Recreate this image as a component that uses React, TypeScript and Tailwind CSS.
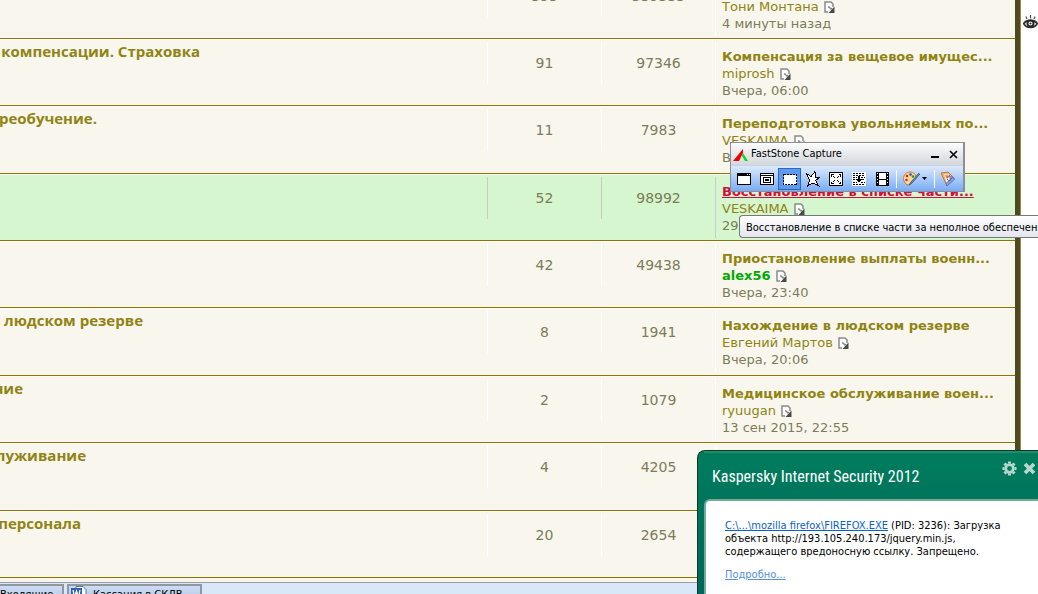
import type { ReactNode } from "react";

type Topic = {
  title: string;
  titleWidth: string;
  height: string;
  topics: string;
  posts: string;
  last?: string;
  user?: string;
  date?: string;
  active?: boolean;
  online?: boolean;
};

const rows: Topic[] = [
  { title: "", titleWidth: "w-0", height: "h-[67px]", topics: "393", posts: "339333", last: "Денежное довольствие", user: "Тони Монтана", date: "4 минуты назад" },
  { title: "компенсации. Страховка", titleWidth: "w-[200px]", height: "h-[67px]", topics: "91", posts: "97346", last: "Компенсация за вещевое имущес...", user: "miprosh", date: "Вчера, 06:00" },
  { title: "реобучение.", titleWidth: "w-[97px]", height: "h-[68px]", topics: "11", posts: "7983", last: "Переподготовка увольняемых по...", user: "VESKAIMA", date: "Вчера, 12:10" },
  { title: "", titleWidth: "w-0", height: "h-[67px]", topics: "52", posts: "98992", last: "Восстановление в списке части...", user: "VESKAIMA", date: "29 сен 2015", active: true },
  { title: "", titleWidth: "w-0", height: "h-[67px]", topics: "42", posts: "49438", last: "Приостановление выплаты военн...", user: "alex56", date: "Вчера, 23:40", online: true },
  { title: "и людском резерве", titleWidth: "w-[143px]", height: "h-[68px]", topics: "8", posts: "1941", last: "Нахождение в людском резерве", user: "Евгений Мартов", date: "Вчера, 20:06" },
  { title: "ние", titleWidth: "w-[23px]", height: "h-[67px]", topics: "2", posts: "1079", last: "Медицинское обслуживание воен...", user: "ryuugan", date: "13 сен 2015, 22:55" },
  { title: "луживание", titleWidth: "w-[86px]", height: "h-[68px]", topics: "4", posts: "4205" },
  { title: "персонала", titleWidth: "w-[81px]", height: "h-[67px]", topics: "20", posts: "2654" },
];

const uiFont = "font-['DejaVu_Sans_Condensed','Noto_Sans',sans-serif]";
const cell = "border-b border-t border-b-[#8c7500] border-t-[#fffdf6] p-0";

function PostIcon() {
  return (
    <svg width="11" height="12" viewBox="0 0 11 12" aria-hidden="true">
      <path d="M1 1h6l2 2v3L5 11H1z" fill="#fff" />
      <path d="M9 6V3L7 1H1v10h3" fill="none" stroke="#8a8a8a" strokeWidth="1.500" />
      <path d="M4 6h1l2 2 1-1" fill="none" stroke="#888" strokeWidth="1.300" />
      <path d="M10.500 5.500V12H4.500z" fill="#4a4a4a" />
    </svg>
  );
}

function Row({ t }: { t: Topic }) {
  const line = t.active ? "border-[#c3cfc0]" : "border-white";
  return (
    <tr className={`${t.height} align-top ${t.active ? "bg-[#d6f6d0]" : "bg-[#f9f6ee]"}`}>
      <td className={`overflow-hidden ${cell}`}>
        {t.title && (
          <div className={`flex justify-end pt-px ${t.titleWidth}`}>
            <a href="#forum" className="shrink-0 whitespace-nowrap font-['Open_Sans','Noto_Sans',sans-serif] text-[15px] font-bold leading-5">
              {t.title}
            </a>
          </div>
        )}
      </td>
      {[t.topics, t.posts].map((n, i) => (
        <td key={i} className={`${cell} pt-[2px]`}>
          <div className={`h-[42px] border-l text-center text-sm leading-[42px] text-[#7c7c58] ${line}`}>{n}</div>
        </td>
      ))}
      <td className={`${cell} pt-[2px]`}>
        <div className={`h-[61px] overflow-hidden whitespace-nowrap border-l pl-[6px] pt-[6px] text-[13px] leading-[17px] ${line}`}>
          {t.last && (
            <>
              <a href="#topic" className={`block font-bold ${t.active ? "text-[#d0103c] underline" : ""}`}>{t.last}</a>
              <div className="flex items-center gap-[5px]">
                <a href="#user" className={t.online ? "font-bold text-[#00aa00]" : ""}>{t.user}</a>
                <a href="#last" aria-label="Последнее сообщение"><PostIcon /></a>
              </div>
              <div className="text-[#7c7c58]">{t.date}</div>
            </>
          )}
        </div>
      </td>
    </tr>
  );
}

function Tool({ label, selected, children }: { label: string; selected?: boolean; children: ReactNode }) {
  return (
    <button aria-label={label} className={`flex h-[22px] w-[23px] items-center justify-center border ${selected ? "border-[#2f66bd] bg-[#5b9bf0]" : "border-transparent"}`}>
      <svg width="16" height="16" viewBox="0 0 16 16" fill="none" stroke="#000" shapeRendering="crispEdges">{children}</svg>
    </button>
  );
}

function CaptureWindow() {
  return (
    <section className={`absolute left-[730px] top-[142px] w-[235px] border border-r-2 border-[#8b8e98] bg-white text-black ${uiFont}`}>
      <header className="flex h-[22px] items-center border-t border-white bg-linear-to-b from-[#fafafa] to-[#d3d7dc] pl-[2px] pr-px text-[11px]">
        <svg width="17" height="14" viewBox="0 0 17 14" aria-hidden="true">
          <path d="M0 13 10 1v4L6 13z" fill="#f00000" />
          <path d="m10 5 5 8h-3L9 8z" fill="#00e020" />
        </svg>
        <h2 className="flex-1 pl-[1px]">FastStone Capture</h2>
        <button aria-label="Свернуть" className="flex h-4 w-[18px] items-center justify-center">
          <svg width="8" height="8" viewBox="0 0 8 8"><path d="M0 5h8v2H0z" /></svg>
        </button>
        <button aria-label="Закрыть" className="flex h-4 w-[18px] items-center justify-center">
          <svg width="9" height="9" viewBox="0 0 9 9"><path d="m1 1 7 7m0-7L1 8" stroke="#000" strokeWidth="1.600" /></svg>
        </button>
      </header>
      <div className="flex h-[26px] items-center border-t border-[#c8d4e6] bg-linear-to-b from-[#dce9fb] to-[#79acf5] pl-[1px]">
        <Tool label="Активное окно"><path d="M1.500 2.500h13v11h-13z" fill="#fff" /><path d="M1 3.500h14M1 4.500h14" /><path d="M11 3.500h1m1 0h1" stroke="#fff" /></Tool>
        <Tool label="Элемент окна"><path d="M1.500 2.500h13v11h-13z" fill="#fff" /><path d="M1 4.500h14M4.500 6.500h7v5h-7zM6.500 8.500h3v1h-3z" /></Tool>
        <Tool label="Прямоугольная область" selected><path d="M1.500 3.500h13v10h-13z" fill="#fff" strokeDasharray="2 1" /></Tool>
        <Tool label="Произвольная область"><path d="M1.500 2.500 6 5.500l4-5 .5 6h4l-4 3 3 5-5.500-2.500-5.500 3 2-5.500z" fill="#fff" /></Tool>
        <Tool label="Полный экран"><path d="M1.500 1.500h13v13h-13z" fill="#fff" /><path d="M3.500 5.500v-2h2m5 0h2v2m0 5v2h-2m-5 0h-2v-2" /><path d="M5 5h1v1H5zM6 6h1v1H6zM10 5h1v1h-1zM9 6h1v1H9zM6 9h1v1H6zM5 10h1v1H5zM9 9h1v1H9zM10 10h1v1h-1z" fill="#000" stroke="none" /></Tool>
        <Tool label="Окно с прокруткой"><path d="M1 1h14v14H1z" fill="#fff" stroke="none" /><path d="M2 2.500h12M2 4.500h12M2 6.500h4m4 0h4M2 8.500h3m6 0h3M2 11.500h4m4 0h4M2 13.500h12" strokeDasharray="2 1" /><path d="M7 5h2v3h2v1h-1v1H9v1H7v-1H6V9H5V8h2z" fill="#000" stroke="none" /></Tool>
        <Tool label="Запись видео"><path d="M3 1h10v14H3z" fill="#fff" stroke="none" /><path d="M3 1v14M13 1v14" strokeWidth="3" /><path d="M4 8.500h8M4 1.500h8M4 14.500h8" /><path d="M3 2v12M13 2v12" stroke="#fff" strokeDasharray="1 2" /></Tool>
        <span className="ml-[3px] h-[18px] w-px bg-white" />
        <button aria-label="Настройки" className="ml-[6px] flex items-center gap-[2px]">
          <svg width="17" height="16" viewBox="0 0 17 16">
            <path d="M7 1C3 1 .5 4 .5 7.500S3 14 6 14c3 0 1-3 3-4s4-1 4-4-3-5-6-5z" fill="#ffd98a" stroke="#c97e26" />
            <circle cx="4" cy="5" r="1.300" fill="#d22" /><circle cx="7.500" cy="3.500" r="1.300" fill="#1b4bd8" /><circle cx="3.500" cy="9" r="1.300" fill="#bd22bd" /><circle cx="10" cy="5.500" r="1.300" fill="#18a032" />
            <path d="m16 2-8 9-2 3 3-2 8-9" fill="#668dd0" stroke="#334784" strokeWidth=".7" />
          </svg>
          <svg width="5" height="3" viewBox="0 0 5 3"><path d="M0 0h5L2.500 3z" /></svg>
        </button>
        <span className="ml-[7px] h-[18px] w-px bg-white" />
        <button aria-label="Редактор" className="ml-[5px]">
          <svg width="16" height="16" viewBox="0 0 16 16">
            <path d="m1 2 7-1 6 6-7 8z" fill="#f7b05c" stroke="#bb6526" strokeWidth=".8" />
            <path d="m4 3 7 1-4 9z" fill="#f6f8ff" /><path d="m5 4 5 1-3 3z" fill="#ed6631" />
            <path d="m9 4 6 4-8 7-1-3 5-3z" fill="#8b9be8" stroke="#5667b5" strokeWidth=".7" /><path d="m7 8 2 2 4-4" fill="none" stroke="#2789a5" />
          </svg>
        </button>
      </div>
    </section>
  );
}

function SecurityPopup() {
  return (
    <section className="absolute bottom-0 right-0 flex h-36 w-[341px] flex-col rounded-tl-lg border-l border-t border-[#063d25] bg-linear-to-b from-[#007d5c] to-[#00655a] pl-[6px]">
      <header className="flex h-12 items-start border-t-2 border-[#27886a] text-[#b5d9cf]">
        <h2 className="flex-1 whitespace-nowrap pl-2 pt-[12px] font-['Roboto_Condensed','Roboto',sans-serif] text-base leading-6 text-white">Kaspersky Internet Security 2012</h2>
        <button aria-label="Настройка" className="mr-[6px] mt-2">
          <svg width="15" height="15" viewBox="-7.500 -7.500 15 15" stroke="currentColor">
            <circle r="3.800" fill="none" strokeWidth="2.800" />
            <path d="M0-7v2M0 5v2M-7 0h2M5 0h2M-5-5l1.500 1.500M3.500 3.500 5 5M-5 5l1.500-1.500M3.500-3.500 5-5" strokeWidth="3" />
          </svg>
        </button>
        <button aria-label="Закрыть уведомление" className="mr-[2px] mt-[9px]">
          <svg width="13" height="13" viewBox="0 0 13 13"><path d="m2 2 9 9m0-9-9 9" stroke="currentColor" strokeWidth="3.800" /></svg>
        </button>
      </header>
      <div className={`flex-1 rounded-tl-md border-l-2 border-t-2 border-[#75ab96] bg-white pl-[19px] pt-[18px] text-[11px] leading-[13px] text-black ${uiFont}`}>
        <p className="w-[290px]">
          <a href="#file" className="text-[#0b62c4] underline">C:\...\mozilla firefox\FIREFOX.EXE</a> (PID: 3236): Загрузка<br />
          объекта http://193.105.240.173/jquery.min.js,<br />
          содержащего вредоносную ссылку. Запрещено.
        </p>
        <a href="#more" className="mt-[10px] inline-block text-[#5791dc] underline">Подробно...</a>
      </div>
    </section>
  );
}

export default function App() {
  return (
    <div className="relative flex h-screen flex-col overflow-hidden bg-[#f9f6ee] font-['DejaVu_Sans',sans-serif] text-[#8f8412]">
      <main className="flex shrink-0 bg-white">
        <div className="min-w-0 flex-1 border-r border-[#948c50] bg-[#f9f6ee]">
          <div className="border-r-[5px] border-[#4e491f] pb-1">
            <table className="-mt-[28px] w-full table-fixed border-separate border-spacing-0">
              <colgroup>
                <col />
                <col className="w-[114px]" />
                <col className="w-[114px]" />
                <col className="w-[300px]" />
              </colgroup>
              <tbody>{rows.map((t, i) => <Row key={i} t={t} />)}</tbody>
            </table>
          </div>
        </div>
        <aside className="flex w-[17px] justify-end pt-[14px]">
          <svg width="15" height="16" viewBox="0 0 15 16" aria-hidden="true">
            <path d="M3 2.500 4 5m3.500-4v3.500M12 2.500 11 5" stroke="#555" strokeWidth="1.300" />
            <path d="M.8 9.500C3 5.500 12 5.500 14.200 9.500 12 14.500 3 14.500.8 9.500z" fill="#ddd" stroke="#333" strokeWidth="1.800" />
            <circle cx="7.500" cy="9.500" r="3" fill="#fff" stroke="#222" strokeWidth="1.800" /><circle cx="7.500" cy="9.500" r="1" fill="#222" />
          </svg>
        </aside>
      </main>
      <footer className={`flex h-8 shrink-0 gap-[3px] border-t border-[#999b9e] bg-[#d9e8f8] pt-[1px] text-[11px] text-black ${uiFont}`}>
        <button className="flex w-16 items-start border-2 border-l-0 border-[#9296a0] bg-linear-to-b from-[#cddcf2] to-[#9fb8dc] pt-[2px] leading-[14px]">Входящие</button>
        <button className="flex w-[135px] items-start gap-[6px] border-2 border-[#9296a0] bg-linear-to-b from-[#cddcf2] to-[#9fb8dc] pl-[2px] leading-[14px]">
          <svg width="16" height="16" viewBox="0 0 16 16" aria-hidden="true">
            <path d="M5 .5h7l3 3v12H5z" fill="#fff" stroke="#5572aa" /><path d="M0 2h11v11H0z" fill="#2b5db5" />
            <path d="m2 4 1.500 7L5.500 5l2 6L9 4" fill="none" stroke="#fff" strokeWidth="1.300" />
          </svg>
          <span className="pt-[2px]">Кассация в СКЛВ</span>
        </button>
      </footer>
      <CaptureWindow />
      <div role="tooltip" className={`absolute left-[739px] right-0 top-[215px] h-[23px] overflow-hidden whitespace-nowrap rounded-l border border-r-0 border-[#777] bg-linear-to-b from-white to-[#e4e5ef] pl-[6px] text-[11px] leading-[23px] text-black ${uiFont}`}>
        Восстановление в списке части за неполное обеспечение
      </div>
      <SecurityPopup />
    </div>
  );
}
